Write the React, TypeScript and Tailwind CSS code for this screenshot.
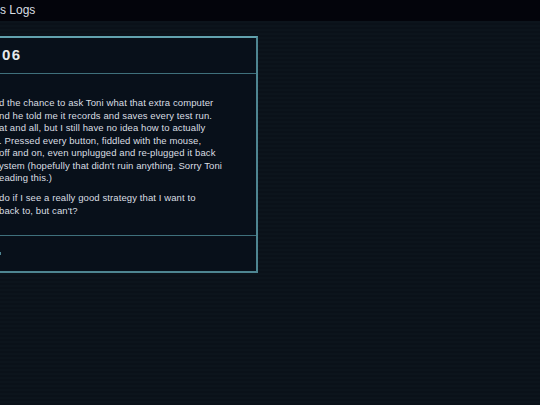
export default function App() {
  const lines = [
    "d the chance to ask Toni what that extra computer",
    "nd he told me it records and saves every test run.",
    "at and all, but I still have no idea how to actually",
    ". Pressed every button, fiddled with the mouse,",
    "off and on, even unplugged and re-plugged it back",
    "ystem (hopefully that didn't ruin anything. Sorry Toni",
    "eading this.)",
  ];
  const lines2 = ["do if I see a really good strategy that I want to", "back to, but can't?"];

  return (
    <div className="w-[540px] h-[405px] overflow-hidden bg-[#0a1119] bg-[repeating-linear-gradient(0deg,#0a1119_0px,#0a1119_2px,#0c141c_2px,#0c141c_4px)] text-[#d9dee2] font-['Liberation_Sans',sans-serif]">
      <div className="h-[21px] bg-[#03040b] text-[12px] leading-[21px] pl-0">s Logs</div>
      <div className="pt-[15px]">
        <div className="w-[281px] -ml-[23px] h-[237px] flex flex-col border-2 border-[#4e8591] border-t-[#62a2ae] bg-[#08101a]">
          <div className="h-[35px] shrink-0 flex items-center pl-[23px] text-[15px] font-bold tracking-[1.5px] text-[#e6eaec]">
            06
          </div>
          <div className="h-px bg-[#3f707c]" />
          <div className="flex-1 pl-[20px] pt-[23px] text-[9.5px] leading-[12.5px] tracking-[0.1px] whitespace-nowrap">
            <div>
              {lines.map((l) => (
                <div key={l}>{l}</div>
              ))}
            </div>
            <div className="mt-[7.5px]">
              {lines2.map((l) => (
                <div key={l}>{l}</div>
              ))}
            </div>
          </div>
          <div className="h-px bg-[#3f707c]" />
          <div className="h-[35px] shrink-0 flex items-center pl-[21px]">
            <span className="block w-px h-[3px] bg-[#4e8591]" />
          </div>
        </div>
      </div>
    </div>
  );
}
